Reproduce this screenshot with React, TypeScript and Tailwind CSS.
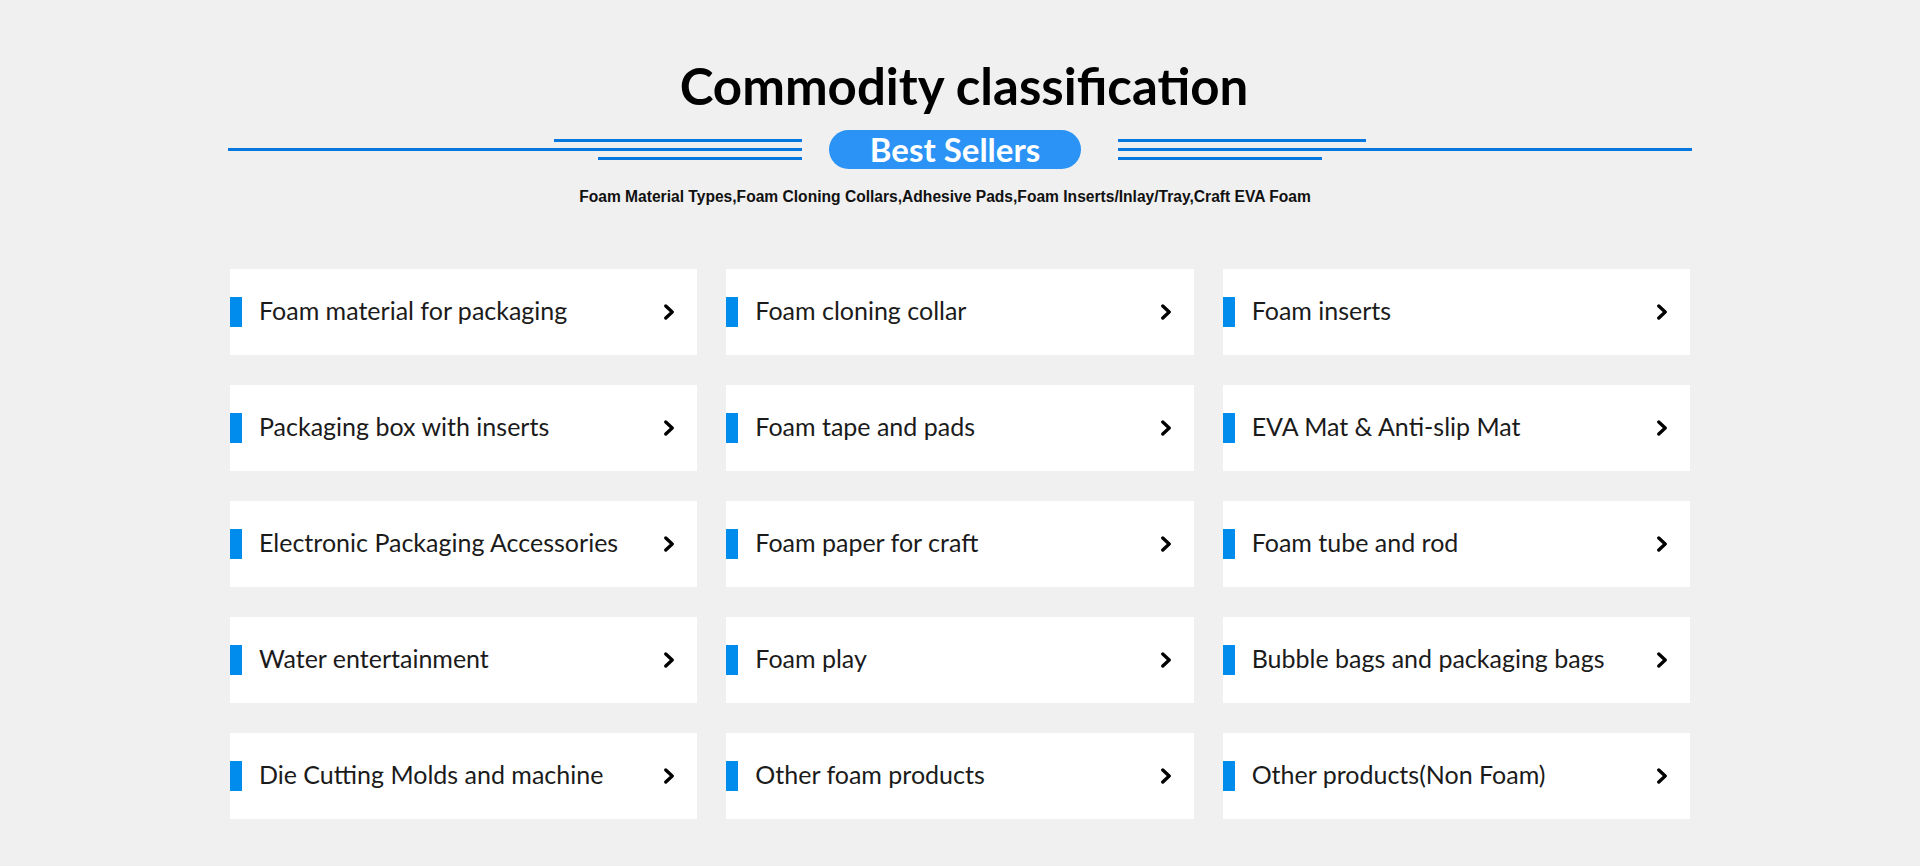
const items = [
  "Foam material for packaging",
  "Foam cloning collar",
  "Foam inserts",
  "Packaging box with inserts",
  "Foam tape and pads",
  "EVA Mat & Anti-slip Mat",
  "Electronic Packaging Accessories",
  "Foam paper for craft",
  "Foam tube and rod",
  "Water entertainment",
  "Foam play",
  "Bubble bags and packaging bags",
  "Die Cutting Molds and machine",
  "Other foam products",
  "Other products(Non Foam)",
];

function Chevron() {
  return (
    <svg width="12" height="16" viewBox="0 0 12 16" fill="none" aria-hidden="true">
      <path d="M2.8 2 L9.2 8 L2.8 14" stroke="#000" strokeWidth="3.3" strokeLinecap="round" strokeLinejoin="round" />
    </svg>
  );
}

function CategoryCard({ label }: { label: string }) {
  return (
    <a href="#" className="flex h-[86px] items-center bg-white pr-[22px]">
      <span className="h-[30px] w-[12px] shrink-0 bg-[#008cec]" />
      <span className="mb-[4px] ml-[17px] flex-1 truncate font-['Lato',sans-serif] text-[25px] text-[#1b1b1b]">
        {label}
      </span>
      <Chevron />
    </a>
  );
}

export default function App() {
  return (
    <div className="h-[866px] w-full overflow-hidden bg-[#f0f0f0]">
      {/* Heading */}
      <div className="flex flex-col items-center pt-[54px]">
        <h2 className="ml-[8px] font-['Lato',sans-serif] text-[51px] font-bold leading-[64px] text-black">
          Commodity classification
        </h2>
        <div className="mt-[12px] flex w-[1464px] items-center">
          <div className="flex flex-1 flex-col items-end gap-[6px]">
            <span className="h-[3px] w-[248px] bg-[#0577df]" />
            <span className="h-[3px] w-full bg-[#0577df]" />
            <span className="h-[3px] w-[204px] bg-[#0577df]" />
          </div>
          <div className="ml-[27px] mr-[37px] flex h-[39px] w-[252px] items-center justify-center rounded-full bg-[#2a93f5] font-['Lato',sans-serif] text-[33px] font-bold text-white">
            Best Sellers
          </div>
          <div className="flex flex-1 flex-col items-start gap-[6px]">
            <span className="h-[3px] w-[248px] bg-[#0577df]" />
            <span className="h-[3px] w-full bg-[#0577df]" />
            <span className="h-[3px] w-[204px] bg-[#0577df]" />
          </div>
        </div>
        <p className="mr-[30px] mt-[16px] font-['Liberation_Sans',Arial,sans-serif] text-[15.6px] font-bold text-[#111]">
          Foam Material Types,Foam Cloning Collars,Adhesive Pads,Foam Inserts/Inlay/Tray,Craft EVA Foam
        </p>
      </div>

      {/* Category grid */}
      <div className="mx-auto mt-[61px] grid w-[1460px] grid-cols-3 gap-x-[29px] gap-y-[30px]">
        {items.map((item) => (
          <CategoryCard key={item} label={item} />
        ))}
      </div>
    </div>
  );
}
